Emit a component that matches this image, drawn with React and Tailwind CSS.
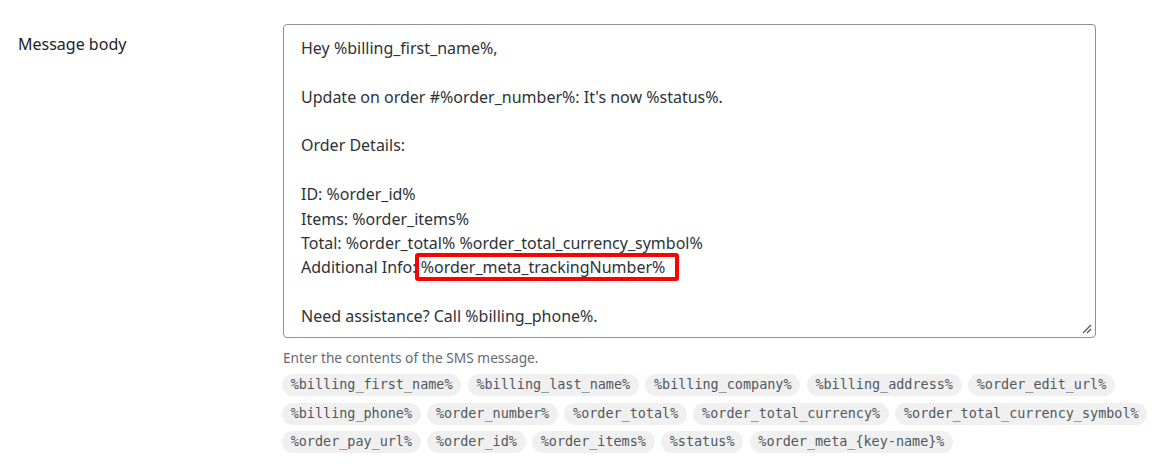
export default function App() {
  const tags = [
    "%billing_first_name%",
    "%billing_last_name%",
    "%billing_company%",
    "%billing_address%",
    "%order_edit_url%",
    "%billing_phone%",
    "%order_number%",
    "%order_total%",
    "%order_total_currency%",
    "%order_total_currency_symbol%",
    "%order_pay_url%",
    "%order_id%",
    "%order_items%",
    "%status%",
    "%order_meta_{key-name}%",
  ];
  const sans = { fontFamily: '"Noto Sans", "Open Sans", sans-serif' };
  return (
    <div className="w-[1163px] h-[468px] bg-white overflow-hidden" style={sans}>
      <div className="flex pt-[24px] pl-[18px]">
        <div className="w-[265px] shrink-0 pt-[8px] text-[16px] leading-[24px] text-[#1d2327]">Message body</div>
        <div className="flex-1">
          <div className="relative w-[813px] h-[314px] border border-[#8c8f94] rounded-[4px] pl-[17px] pt-[11px] text-[16px] leading-[24.36px] text-[#2c3338] overflow-hidden">
            <div>Hey %billing_first_name%,</div>
            <div>&nbsp;</div>
            <div>Update on order #%order_number%: It's now %status%.</div>
            <div>&nbsp;</div>
            <div>Order Details:</div>
            <div>&nbsp;</div>
            <div>ID: %order_id%</div>
            <div>Items: %order_items%</div>
            <div>Total: %order_total% %order_total_currency_symbol%</div>
            <div>
              Additional Info:{" "}
              <span className="relative">
                %order_meta_trackingNumber%
                <span className="absolute left-[-6px] right-[-14px] top-[-3px] bottom-[-3px] border-[4px] border-[#ff0000] rounded-[3px]"></span>
              </span>
            </div>
            <div>&nbsp;</div>
            <div>Need assistance? Call %billing_phone%.</div>
            <svg className="absolute right-[2px] bottom-[2px]" width="12" height="12" viewBox="0 0 12 12">
              <line x1="2" y1="10" x2="10" y2="2" stroke="#50575e" strokeWidth="1.3" />
              <line x1="6" y1="10" x2="10" y2="6" stroke="#50575e" strokeWidth="1.3" />
            </svg>
          </div>
          <div className="mt-[11px] text-[13.7px] leading-[18px] text-[#646970]">Enter the contents of the SMS message.</div>
          <div className="flex flex-wrap gap-x-[6.5px] gap-y-[6.7px] mt-[7px] -ml-[1px] w-[875px]">
            {tags.map((t) => (
              <span
                key={t}
                className="h-[22px] px-[8.7px] rounded-full bg-[#f0f0f0] text-[#50575e] text-[13.45px] leading-[22px]"
                style={{ fontFamily: '"DejaVu Sans Mono", "Liberation Mono", monospace' }}
              >
                {t}
              </span>
            ))}
          </div>
        </div>
      </div>
    </div>
  );
}
